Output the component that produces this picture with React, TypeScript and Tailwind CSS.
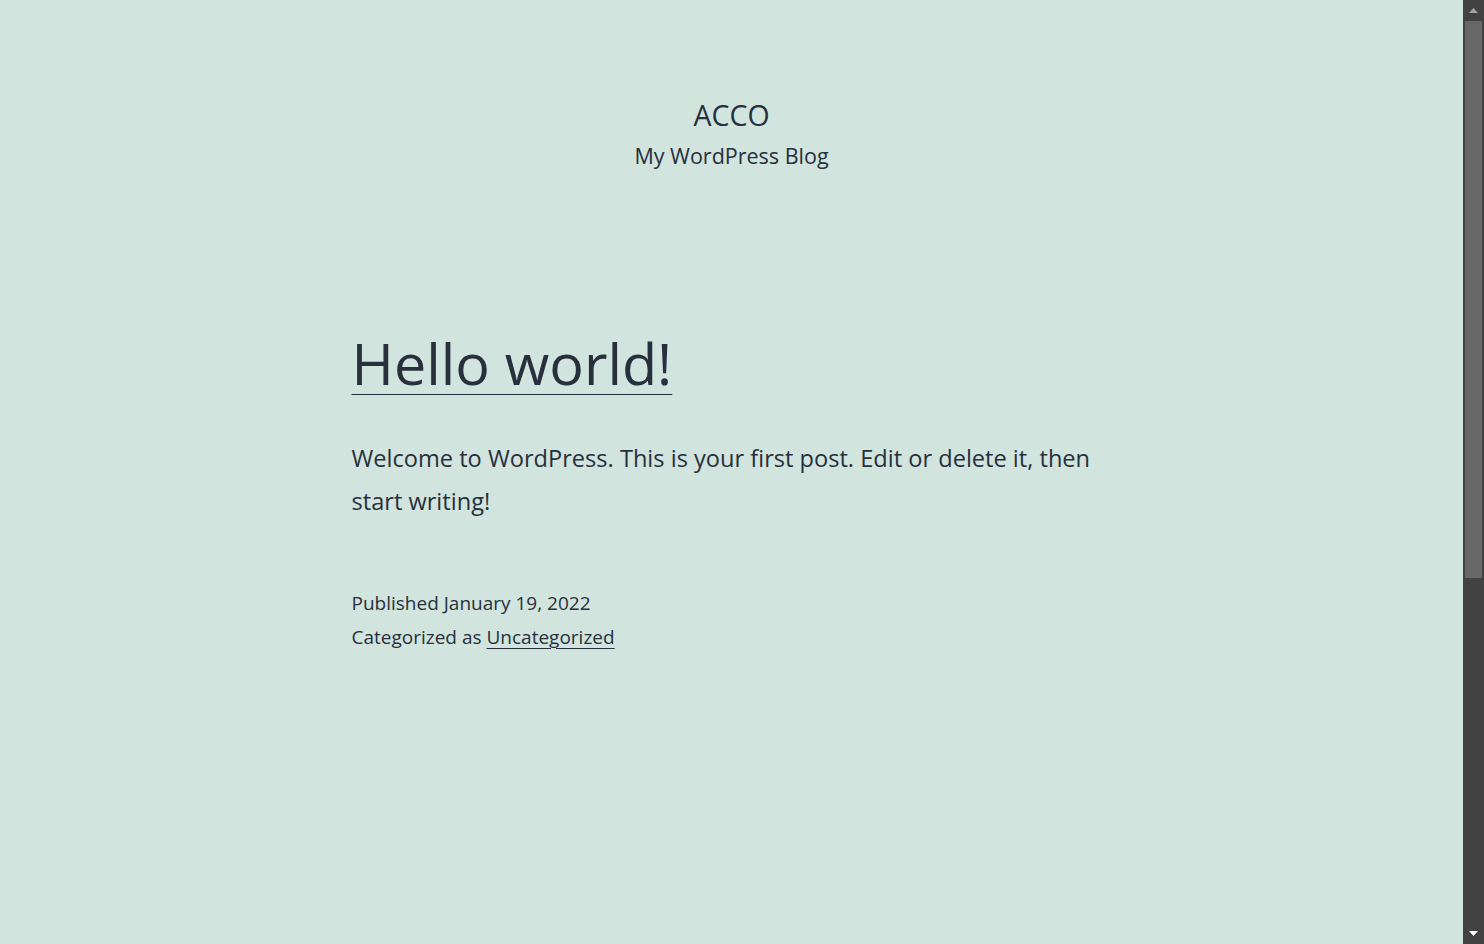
import React from "react";

// fake browser scrollbar on the right edge
function Scrollbar() {
  return (
    <div className="flex h-full w-[21px] shrink-0 flex-col items-center bg-[#424242]">
      <div className="flex h-[21px] w-full items-center justify-center">
        <svg width="9" height="5" viewBox="0 0 9 5">
          <path d="M0 5 L4.5 0 L9 5 Z" fill="#a3a3a3" />
        </svg>
      </div>
      <div className="h-[557px] w-[17px] bg-[#686868]" />
      <div className="flex-1" />
      <div className="flex h-[21px] w-full items-center justify-center">
        <svg width="9" height="5" viewBox="0 0 9 5">
          <path d="M0 0 L9 0 L4.5 5 Z" fill="#ffffff" />
        </svg>
      </div>
    </div>
  );
}

export default function App() {
  return (
    <div className="flex h-[944px] w-full overflow-hidden bg-[#d1e4dd] font-['Open_Sans',sans-serif] text-[#28303d]">
      <main className="flex flex-1 flex-col items-center">
        <header className="flex flex-col items-center pt-[97px]">
          <h1 className="text-[28.5px] leading-[36px]">ACCO</h1>
          <p className="mt-2 text-[21.5px] leading-[30px]">My WordPress Blog</p>
        </header>

        <article className="mt-[156px] w-[760px]">
          <h2 className="text-[57.5px] leading-[72px]">
            <a href="#" className="underline decoration-1 underline-offset-[9px]">
              Hello world!
            </a>
          </h2>

          <div className="mt-[38px] text-[23.6px] leading-[43px]">
            <p>Welcome to WordPress. This is your first post. Edit or delete it, then start writing!</p>
          </div>

          <footer className="mt-[63px] text-[19px] leading-[34px]">
            <div>Published January 19, 2022</div>
            <div>
              Categorized as{" "}
              <a href="#" className="underline decoration-1 underline-offset-[4px]">
                Uncategorized
              </a>
            </div>
          </footer>
        </article>
      </main>
      <Scrollbar />
    </div>
  );
}
